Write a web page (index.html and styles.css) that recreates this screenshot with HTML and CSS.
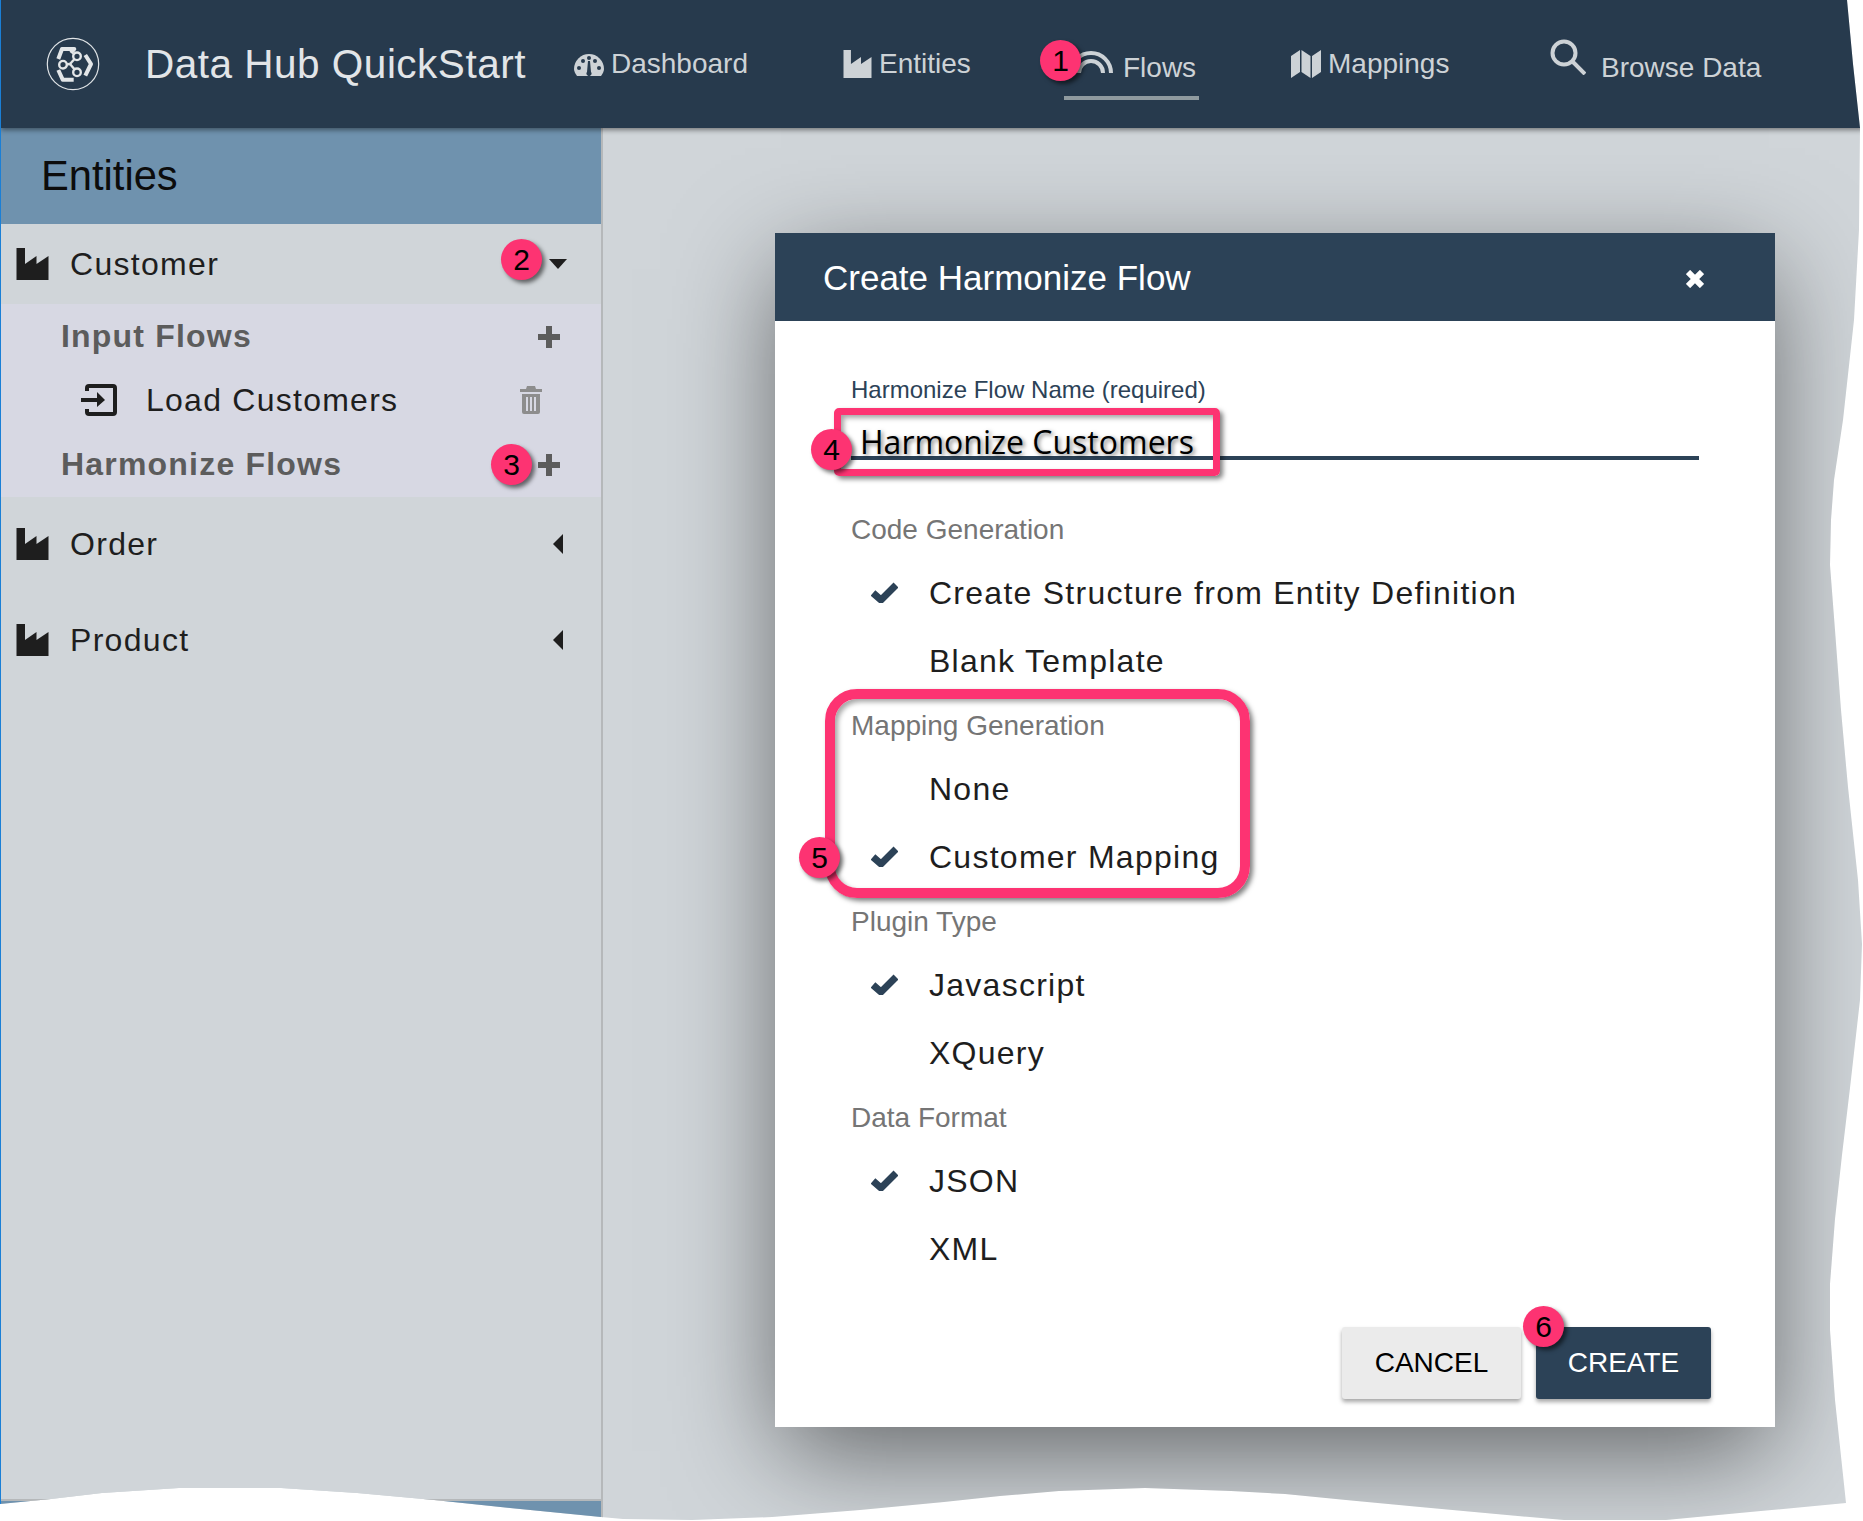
FILE: index.html
```html
<!DOCTYPE html>
<html lang="en">
<head>
    <meta charset="UTF-8">
    <title>Data Hub QuickStart</title>
    <link rel="stylesheet" href="styles.css">
</head>
<body>
<div class="app">
    <header class="topbar">
        <svg class="logo" viewBox="-27 -27 54 54">
            <circle r="25.7" class="logo-ring"/>
            <g class="logo-mark">
                <polyline points="-14.7,-5 -11,-15 1.3,-15 -2,-11"/>
                <polyline points="12.3,-9 18,0 12.3,11.7"/>
                <polyline points="-14.7,6 -10.3,15.7 0.7,15.7"/>
            </g>
            <g class="logo-nodes">
                <line x1="-3" y1="0" x2="4" y2="-7.7"/>
                <line x1="-3" y1="0" x2="4" y2="8.3"/>
                <line x1="-10" y1="0.7" x2="-3" y2="0"/>
                <circle cx="4" cy="-7.7" r="3.8"/>
                <circle cx="-10" cy="0.7" r="3.8"/>
                <circle cx="4" cy="8.3" r="3.8"/>
            </g>
        </svg>
        <div class="brand">Data Hub QuickStart</div>
        <nav class="nav">
            <a class="nav-item">
                <svg class="nav-icon dash" viewBox="0 0 30 22">
                    <path class="fill" d="M3 22C1 19 0 17 0 15A15 15 0 0 1 30 15C30 17 29 19 27 22Z"/>
                    <g class="cut">
                        <circle cx="5" cy="14" r="2"/><circle cx="9" cy="7" r="2"/>
                        <circle cx="15" cy="4" r="2"/><circle cx="21" cy="7" r="2"/>
                        <circle cx="25" cy="14" r="2"/>
                        <path d="M14 7H16L17 18A2.5 2.5 0 1 1 13 18Z"/>
                    </g>
                </svg>
                <span>Dashboard</span>
            </a>
            <a class="nav-item">
                <svg class="nav-icon factory" viewBox="0 0 32 32"><path class="fill" d="M0 0H8.500V16L20 8V16L32 8V32H0Z"/></svg>
                <span>Entities</span>
            </a>
            <a class="nav-item active">
                <svg class="nav-icon flows" viewBox="0 0 38 24">
                    <path d="M4 24A12 12 0 0 1 28 24"/>
                    <path d="M-4 24A20 20 0 0 1 36 24"/>
                </svg>
                <span>Flows</span>
            </a>
            <a class="nav-item">
                <svg class="nav-icon maps" viewBox="0 0 30 28">
                    <path class="fill" d="M0 6L9 0V22L0 28ZM10.500 0L19.500 6V28L10.500 22ZM21 6L30 0V22L21 28Z"/>
                </svg>
                <span>Mappings</span>
            </a>
            <a class="nav-item browse">
                <svg class="nav-icon search" viewBox="0 0 36 36">
                    <circle cx="14" cy="14" r="11.500"/>
                    <line x1="22.500" y1="22.500" x2="35" y2="35"/>
                </svg>
                <span>Browse Data</span>
            </a>
        </nav>
    </header>

    <div class="main">
        <aside class="sidebar">
            <h2 class="side-title">Entities</h2>
            <div class="side-list">
                <div class="entity entity-open">
                    <svg class="factory-icon" viewBox="0 0 32 32"><path d="M0 0H8.500V16L20 8V16L32 8V32H0Z"/></svg>
                    <span class="entity-name">Customer</span>
                    <span class="caret-down"></span>
                </div>
                <div class="flows-panel">
                    <div class="flow-head">
                        <span>Input Flows</span>
                        <svg class="plus" viewBox="0 0 22 22"><path d="M8 0H14V8H22V14H14V22H8V14H0V8H8Z"/></svg>
                    </div>
                    <div class="flow-item">
                        <svg class="signin" viewBox="0 0 36 32">
                            <path class="signin-box" d="M6 7V4A2 2 0 0 1 8 2H32A2 2 0 0 1 34 4V28A2 2 0 0 1 32 30H8A2 2 0 0 1 6 28V25"/>
                            <path class="signin-arrow" d="M0 14H16V8L24 16L16 23V18H0Z"/>
                        </svg>
                        <span class="flow-name">Load Customers</span>
                        <svg class="trash" viewBox="0 0 22 28">
                            <path d="M7 0H15L16 3H22V6H0V3H6ZM2 8H20V26A2 2 0 0 1 18 28H4A2 2 0 0 1 2 26ZM6 11V25H8V11ZM10 11V25H12V11ZM14 11V25H16V11Z" fill-rule="evenodd"/>
                        </svg>
                    </div>
                    <div class="flow-head">
                        <span>Harmonize Flows</span>
                        <svg class="plus" viewBox="0 0 22 22"><path d="M8 0H14V8H22V14H14V22H8V14H0V8H8Z"/></svg>
                    </div>
                </div>
                <div class="entity">
                    <svg class="factory-icon" viewBox="0 0 32 32"><path d="M0 0H8.500V16L20 8V16L32 8V32H0Z"/></svg>
                    <span class="entity-name">Order</span>
                    <span class="caret-left"></span>
                </div>
                <div class="entity">
                    <svg class="factory-icon" viewBox="0 0 32 32"><path d="M0 0H8.500V16L20 8V16L32 8V32H0Z"/></svg>
                    <span class="entity-name">Product</span>
                    <span class="caret-left"></span>
                </div>
            </div>
            <div class="side-foot"></div>
        </aside>

        <section class="content">
            <div class="dialog">
                <div class="dialog-head">
                    <span>Create Harmonize Flow</span>
                    <svg class="close" viewBox="0 0 18 18"><path d="M2 2L16 16M16 2L2 16"/></svg>
                </div>
                <div class="dialog-body">
                    <label class="field-label">Harmonize Flow Name (required)</label>
                    <div class="field-input">Harmonize Customers</div>

                    <div class="group-label first">Code Generation</div>
                    <div class="option"><svg class="check" viewBox="0 0 27 21"><path d="M2 11L10 18L25 3"/></svg><span>Create Structure from Entity Definition</span></div>
                    <div class="option"><span>Blank Template</span></div>

                    <div class="group-label">Mapping Generation</div>
                    <div class="option"><span>None</span></div>
                    <div class="option"><svg class="check" viewBox="0 0 27 21"><path d="M2 11L10 18L25 3"/></svg><span>Customer Mapping</span></div>

                    <div class="group-label">Plugin Type</div>
                    <div class="option"><svg class="check" viewBox="0 0 27 21"><path d="M2 11L10 18L25 3"/></svg><span>Javascript</span></div>
                    <div class="option"><span>XQuery</span></div>

                    <div class="group-label">Data Format</div>
                    <div class="option"><svg class="check" viewBox="0 0 27 21"><path d="M2 11L10 18L25 3"/></svg><span>JSON</span></div>
                    <div class="option"><span>XML</span></div>

                    <div class="dialog-actions">
                        <button class="btn btn-cancel">CANCEL</button>
                        <button class="btn btn-create">CREATE</button>
                    </div>
                </div>
            </div>
        </section>
    </div>

    <!-- callouts drawn on top of the screenshot -->
    <div class="callout-box box-name"></div>
    <div class="callout-box box-mapping"></div>
    <div class="badge badge-1">1</div>
    <div class="badge badge-2">2</div>
    <div class="badge badge-3">3</div>
    <div class="badge badge-4">4</div>
    <div class="badge badge-5">5</div>
    <div class="badge badge-6">6</div>
</div>
</body>
</html>
```

FILE: styles.css
```css
* {
    box-sizing: border-box;
}

body {
    margin: 0;
    background-color: #fff;
    font-family: "Liberation Sans", Arial, sans-serif;
}

/* torn paper edge on the right and bottom */
.app {
    position: relative;
    width: 1863px;
    height: 1521px;
    display: flex;
    flex-direction: column;
    background-color: #d0d5d9;
    border-left: 1px solid #1a7fd6;
    overflow: hidden;
    clip-path: polygon(0 0, 1847px 0, 1853px 64px, 1860px 128px, 1859px 230px, 1854px 320px, 1843px 420px, 1834px 480px, 1831px 520px, 1830px 565px, 1835px 630px, 1841px 710px, 1848px 787px, 1858px 880px, 1862px 944px, 1860px 1000px, 1850px 1088px, 1842px 1155px, 1835px 1219px, 1830px 1284px, 1830px 1330px, 1835px 1400px, 1846px 1503px, 1750px 1512px, 1666px 1520px, 1564px 1520px, 1496px 1514px, 1420px 1507px, 1346px 1500px, 1285px 1494px, 1231px 1491px, 1145px 1488px, 1059px 1491px, 1000px 1496px, 944px 1502px, 860px 1510px, 772px 1517px, 692px 1520px, 623px 1519px, 601px 1517px, 510px 1508px, 434px 1500px, 357px 1493px, 281px 1488px, 179px 1488px, 102px 1493px, 51px 1499px, 0 1504px);
}

.fill {
    fill: #cdd2d6;
}

.topbar {
    position: relative;
    z-index: 2;
    flex: none;
    height: 128px;
    display: flex;
    align-items: center;
    background-color: #273a4d;
    box-shadow: 0 2px 5px rgba(0, 0, 0, 0.45);
}

.logo {
    flex: none;
    width: 54px;
    height: 54px;
    margin-left: 45px;
}

.logo-ring {
    fill: none;
    stroke: #dfe3e6;
    stroke-width: 1.2;
}

.logo-mark {
    fill: none;
    stroke: #e3e6e8;
    stroke-width: 4;
    stroke-linejoin: round;
}

.logo-nodes {
    fill: #273a4d;
    stroke: #e3e6e8;
    stroke-width: 2.4;
}

.brand {
    flex: none;
    width: 429px;
    margin-left: 45px;
    color: #e2e5e8;
    font-size: 40.5px;
    letter-spacing: 0.5px;
}

.nav {
    display: grid;
    grid-template-columns: 269px 221px 227px 259px auto;
    align-items: center;
}

.nav-item {
    display: flex;
    align-items: center;
    gap: 7px;
    color: #cdd2d6;
    font-size: 28px;
    line-height: 40px;
}

.nav-icon {
    flex: none;
}

.dash {
    width: 30px;
    height: 22px;
    margin-top: 2px;
}

.cut {
    fill: #273a4d;
}

.factory {
    width: 29px;
    height: 28px;
}

.flows {
    width: 38px;
    height: 24px;
    margin-top: -14px;
    margin-left: 11px;
    fill: none;
    stroke: #cdd2d6;
    stroke-width: 4;
    overflow: visible;
}

.nav-item.active {
    width: 135px;
    position: relative;
    height: 70px;
    padding-top: 11px;
    border-bottom: 4px solid #8f9a9f;
    margin-top: 1px;
    gap: 10px;
}

.maps {
    width: 30px;
    height: 28px;
}

.browse {
    gap: 15px;
}

.browse span {
    margin-top: 8px;
}

.search {
    width: 36px;
    height: 36px;
    margin-top: -14px;
    fill: none;
    stroke: #cdd2d6;
    stroke-width: 4;
}

.main {
    flex: 1;
    display: flex;
    min-height: 0;
}

.sidebar {
    flex: none;
    width: 602px;
    display: flex;
    flex-direction: column;
    border-right: 2px solid #b5b8ba;
}

.side-title {
    flex: none;
    height: 96px;
    margin: 0;
    padding-left: 40px;
    background-color: #6f92ae;
    color: #0c0c0c;
    font-size: 41.7px;
    font-weight: normal;
    line-height: 96px;
}

.side-list {
    flex: 1;
    background-color: #d0d5d9;
    border-bottom: 2px solid #b5b8ba;
}

.side-foot {
    flex: none;
    height: 20px;
    background-color: #6f92ae;
}

.entity {
    display: flex;
    align-items: center;
    height: 96px;
    padding: 0 32px 2px 15px;
    color: #1e1e1e;
}

.entity-open {
    height: 80px;
    padding-bottom: 0;
}

.factory-icon {
    flex: none;
    width: 33px;
    height: 32px;
    fill: #1e1e1e;
}

.entity-name {
    flex: 1;
    margin-left: 21px;
    font-size: 32px;
    letter-spacing: 1.3px;
}

.caret-down {
    width: 0;
    height: 0;
    margin-right: 2px;
    border-left: 9px solid transparent;
    border-right: 9px solid transparent;
    border-top: 10px solid #1e1e1e;
}

.caret-left {
    width: 0;
    height: 0;
    margin-right: 6px;
    border-top: 10px solid transparent;
    border-bottom: 10px solid transparent;
    border-right: 10px solid #1e1e1e;
}

.flows-panel {
    height: 193px;
    background-color: #d7d8e3;
}

.flow-head {
    display: flex;
    align-items: center;
    justify-content: space-between;
    height: 64px;
    padding: 0 41px 0 60px;
    color: #5c5c5c;
    font-size: 32px;
    font-weight: bold;
    letter-spacing: 1.2px;
}

.plus {
    width: 22px;
    height: 22px;
    margin-top: 2px;
    fill: #5c5c5c;
}

.flow-item {
    display: flex;
    align-items: center;
    height: 64px;
    padding: 0 59px 0 80px;
    color: #1e1e1e;
}

.signin {
    flex: none;
    width: 36px;
    height: 32px;
}

.signin-box {
    fill: none;
    stroke: #1e1e1e;
    stroke-width: 4;
}

.signin-arrow {
    fill: #1e1e1e;
}

.flow-name {
    flex: 1;
    margin-left: 29px;
    font-size: 32px;
    letter-spacing: 1.25px;
}

.trash {
    width: 22px;
    height: 28px;
    fill: #8d8d8d;
}

.content {
    flex: 1;
    min-width: 0;
    overflow: hidden;
    padding: 105px 0 0 172px;
}

.dialog {
    width: 1000px;
    height: 1194px;
    background-color: #fff;
    box-shadow: 0 30px 100px -6px rgba(0, 0, 0, 0.54);
}

.dialog-head {
    display: flex;
    align-items: center;
    justify-content: space-between;
    height: 88px;
    padding: 2px 71px 0 48px;
    background-color: #2c4257;
    color: #fff;
    font-size: 35px;
}

.close {
    width: 18px;
    height: 18px;
    margin-top: 2px;
    fill: none;
    stroke: #fff;
    stroke-width: 6;
}

.dialog-body {
    padding: 55px 76px 0;
}

.field-label {
    display: block;
    height: 28px;
    color: #2c4257;
    font-size: 24px;
    line-height: 28px;
}

.field-input {
    height: 56px;
    padding: 19px 0 0 9px;
    border-bottom: 4px solid #2c4257;
    color: #000;
    font-family: "Open Sans", sans-serif;
    font-size: 32px;
    line-height: 38px;
    text-shadow: 2px 2px 4px rgba(0, 0, 0, 0.5);
}

.group-label {
    height: 60px;
    padding-top: 1px;
    color: #757575;
    font-size: 28px;
    line-height: 60px;
}

.group-label.first {
    margin-top: 39px;
}

.option {
    position: relative;
    height: 68px;
    padding-left: 78px;
    color: #1e1e1e;
    font-size: 32px;
    letter-spacing: 1.26px;
    line-height: 68px;
}

.check {
    position: absolute;
    left: 20px;
    top: 23px;
    width: 27px;
    height: 21px;
    fill: none;
    stroke: #2c4257;
    stroke-width: 7;
}

.dialog-actions {
    display: flex;
    justify-content: flex-end;
    gap: 15px;
    margin: 44px -12px 0 0;
}

.btn {
    height: 72px;
    border: none;
    border-radius: 3px;
    font-family: inherit;
    font-size: 28px;
    box-shadow: 0 3px 4px rgba(0, 0, 0, 0.35);
}

.btn-cancel {
    width: 179px;
    background-color: #ebebeb;
    color: #000;
}

.btn-create {
    width: 175px;
    background-color: #2c4257;
    color: #fff;
}

/* pink callouts */
.callout-box {
    position: absolute;
    z-index: 3;
    border-style: solid;
    border-color: #fd3372;
    box-shadow: 3px 3px 5px rgba(0, 0, 0, 0.5), inset 3px 3px 5px rgba(0, 0, 0, 0.35);
}

.box-name {
    left: 833px;
    top: 408px;
    width: 386px;
    height: 68px;
    border-width: 7px;
    border-radius: 5px;
}

.box-mapping {
    left: 824px;
    top: 689px;
    width: 425px;
    height: 209px;
    border-width: 10px;
    border-radius: 32px;
}

.badge {
    position: absolute;
    z-index: 4;
    width: 41px;
    height: 41px;
    border-radius: 50%;
    background-color: #fd3372;
    color: #000;
    font-size: 30px;
    line-height: 41px;
    text-align: center;
    box-shadow: 3px 3px 4px rgba(0, 0, 0, 0.55);
}

.badge-1 { left: 1039px; top: 40px; }
.badge-2 { left: 500px; top: 239px; }
.badge-3 { left: 490px; top: 444px; }
.badge-4 { left: 810px; top: 429px; }
.badge-5 { left: 798px; top: 837px; }
.badge-6 { left: 1522px; top: 1306px; }
```
